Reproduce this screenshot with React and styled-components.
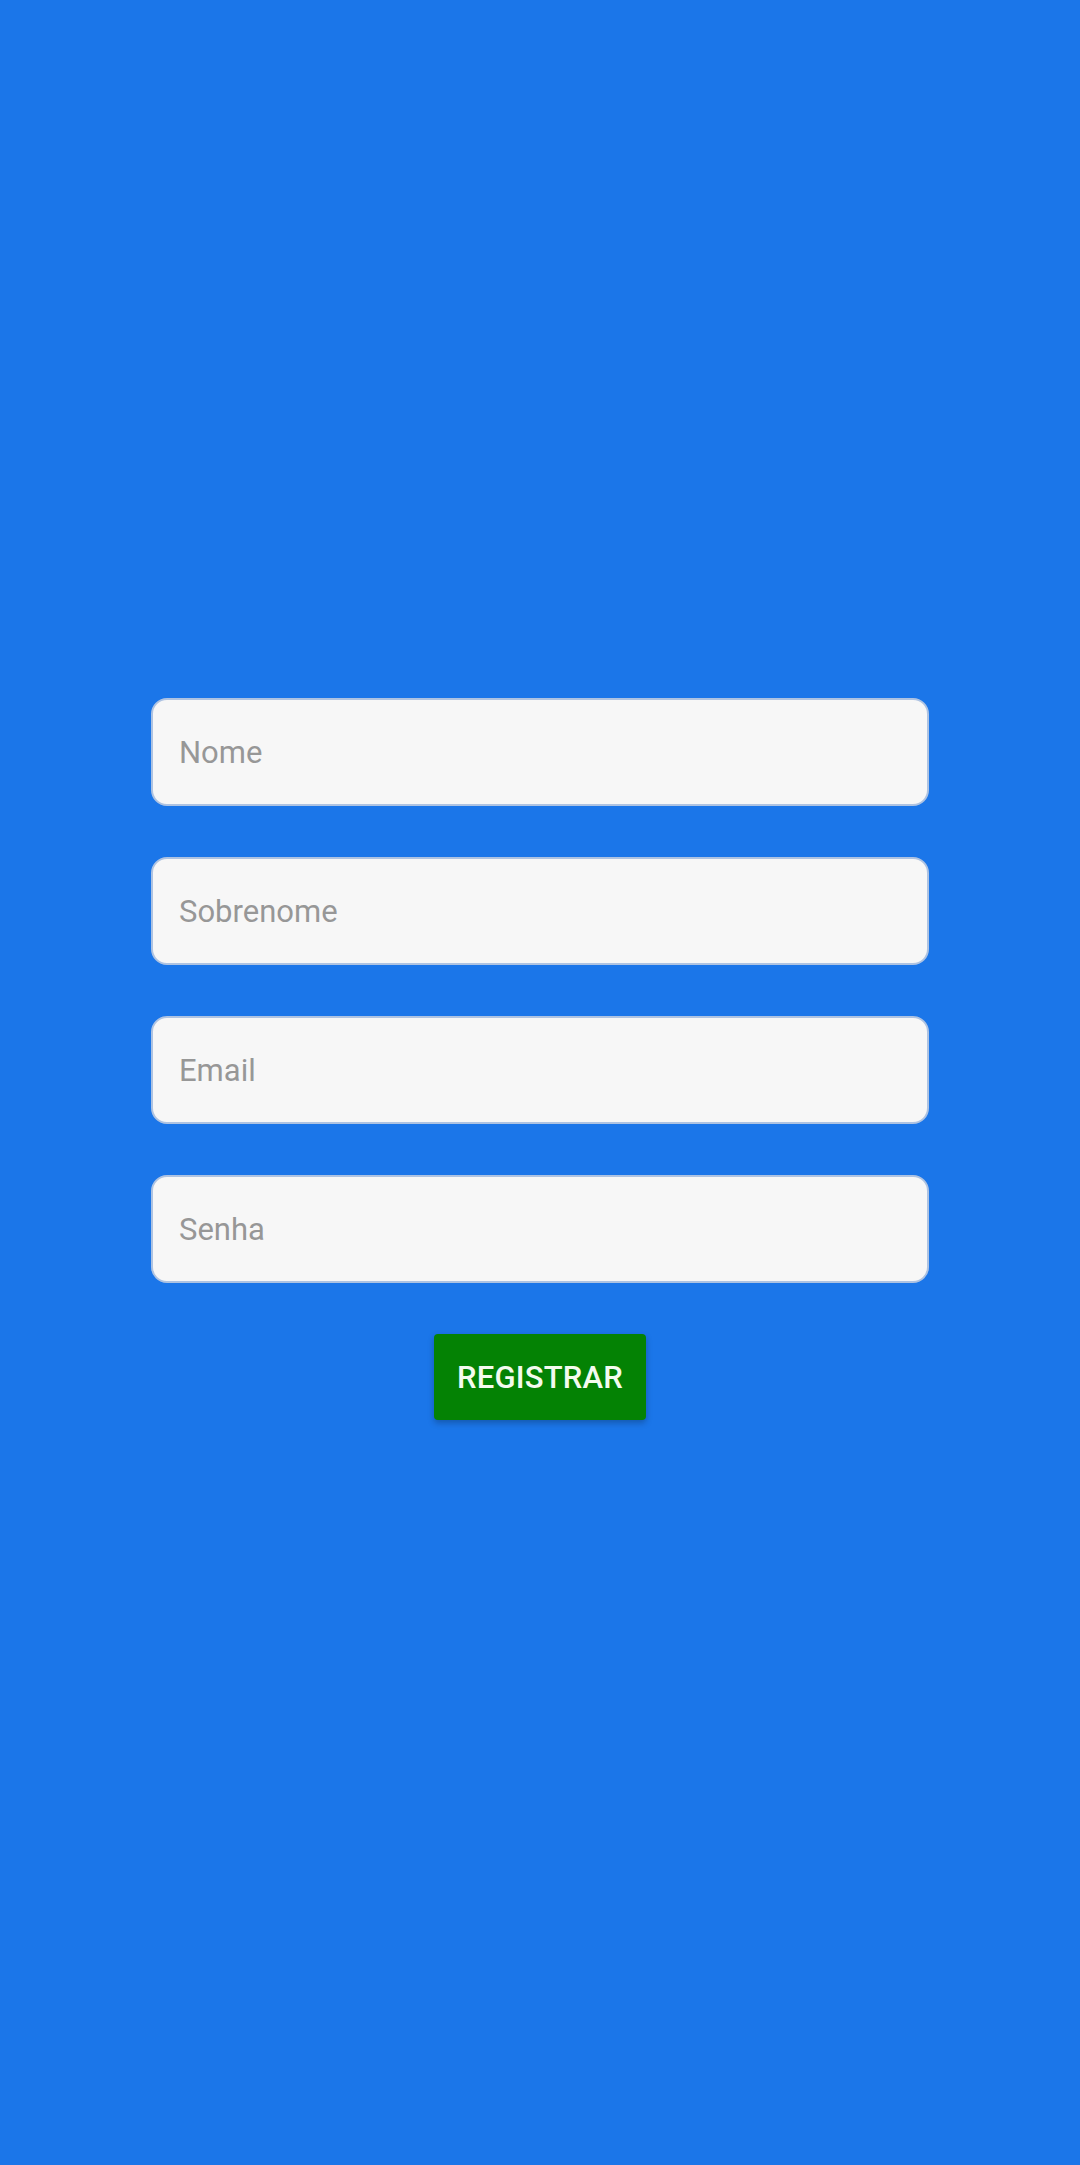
import React from "react";
import styled, { createGlobalStyle } from "styled-components";

const Global = createGlobalStyle`
  html, body { margin: 0; padding: 0; background: #1b76e9; }
  * { box-sizing: border-box; }
`;

const Page = styled.div`
  width: 1080px;
  min-height: 2165px;
  background: #1b76e9;
  display: flex;
  flex-direction: column;
  align-items: center;
  padding-top: 698px;
  font-family: Roboto, "Noto Sans", sans-serif;
`;

const Form = styled.form`
  display: flex;
  flex-direction: column;
  align-items: center;
  gap: 51px;
  width: 778px;
`;

const Field = styled.input`
  width: 100%;
  height: 108px;
  border: 2px solid #aec3e2;
  border-radius: 16px;
  background: #f7f7f7;
  padding: 0 26px;
  font-family: Roboto, "Noto Sans", sans-serif;
  font-size: 31px;
  color: #333;
  outline: none;
  &::placeholder { color: #979797; }
`;

const Button = styled.button`
  width: 212px;
  height: 86px;
  border: none;
  border-radius: 4px;
  background: #048204;
  color: #f4fbef;
  font-family: Roboto, "Noto Sans", sans-serif;
  font-weight: 500;
  font-size: 31px;
  letter-spacing: 0.2px;
  box-shadow: 0 3px 6px rgba(0, 0, 0, 0.25);
  cursor: pointer;
`;

export default function App() {
  return (
    <Page>
      <Global />
      <Form onSubmit={(e) => e.preventDefault()}>
        <Field placeholder="Nome" />
        <Field placeholder="Sobrenome" />
        <Field placeholder="Email" type="email" />
        <Field placeholder="Senha" type="password" />
        <Button type="submit">REGISTRAR</Button>
      </Form>
    </Page>
  );
}
